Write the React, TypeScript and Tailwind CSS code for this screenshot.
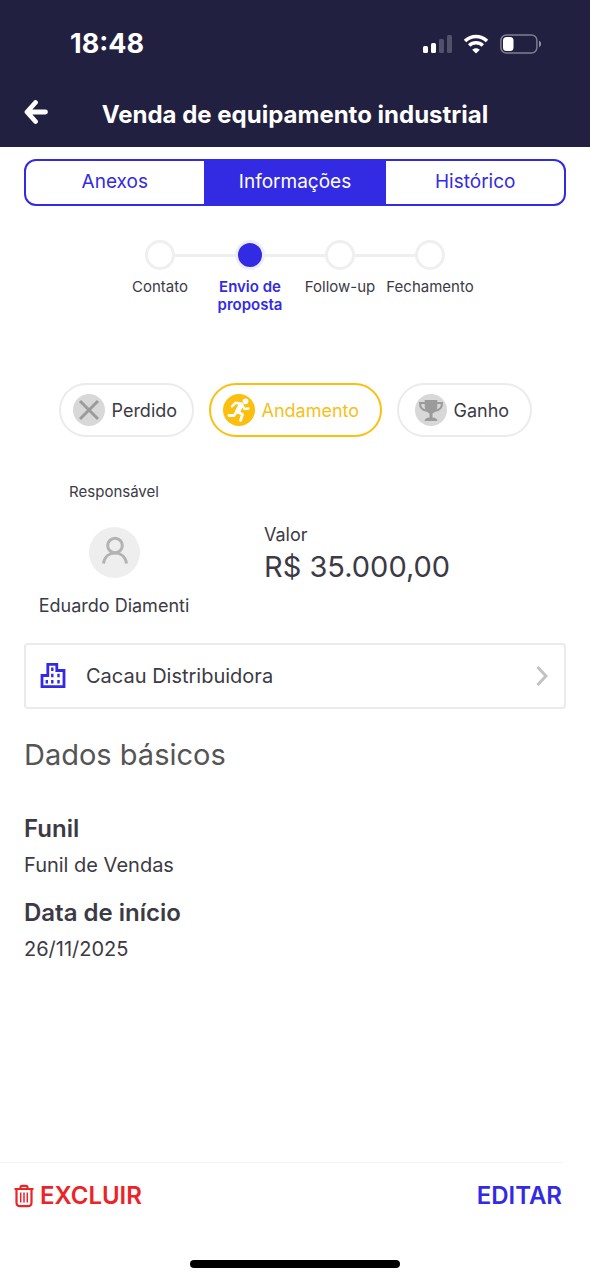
import type { ReactNode } from "react";

const tabs = ["Anexos", "Informações", "Histórico"];
const steps = ["Contato", "Envio de proposta", "Follow-up", "Fechamento"];
const activeStep = 1;

function StatusBar() {
  return (
    <div className="flex h-22 items-center justify-between pr-12 pl-[70px]">
      <span className="text-[27px] leading-8 font-bold">18:48</span>
      <div className="flex items-center gap-[10px]">
        <svg className="h-5 w-[31px]" viewBox="0 0 31 20" fill="currentColor" aria-hidden="true">
          <rect x="0" y="12" width="5" height="7" rx="1.5" />
          <rect x="8" y="9" width="5" height="10" rx="1.5" />
          <rect x="16" y="5" width="5" height="14" rx="1.5" opacity="0.22" />
          <rect x="24" y="1" width="5" height="18" rx="1.5" opacity="0.22" />
        </svg>
        <svg className="h-5 w-[26px]" viewBox="0 0 26 20" fill="none" stroke="currentColor" aria-hidden="true">
          <path d="M1 7C7.500.9 16.500.9 23 7" strokeWidth="3.600" />
          <path d="M5.200 11.500C9 7.900 15 7.900 18.800 11.500" strokeWidth="3.500" />
          <path d="M12 19.600L8.200 15.700C10.200 13.600 13.800 13.600 15.800 15.700Z" fill="currentColor" stroke="none" />
        </svg>
        <svg className="h-5 w-[42px]" viewBox="0 0 42 20" fill="none" aria-hidden="true">
          <rect x="0.900" y="0.900" width="36" height="18.200" rx="5.500" stroke="currentColor" strokeWidth="1.500" opacity="0.42" />
          <rect x="3" y="3" width="10.500" height="14" rx="3.500" fill="currentColor" />
          <path d="M39 6.800C41.800 8 41.800 12 39 13.200Z" fill="currentColor" opacity="0.5" />
        </svg>
      </div>
    </div>
  );
}

function Tabs() {
  return (
    <div role="tablist" className="mx-6 mt-3 flex h-[47px] overflow-hidden rounded-xl border-2 border-[#332be3]">
      {tabs.map((tab) => (
        <button
          key={tab}
          type="button"
          role="tab"
          aria-selected={tab === "Informações"}
          className={
            tab === "Informações"
              ? "flex-1 bg-[#332be3] text-[19px] text-white"
              : "w-[33%] text-[19px] text-[#332be3]"
          }
        >
          {tab}
        </button>
      ))}
    </div>
  );
}

function Stepper() {
  return (
    <ol className="mt-[34px] flex h-[88px] justify-center">
      {steps.map((step, i) => (
        <li key={step} className="flex w-[90px] flex-col items-center">
          <div className="flex w-full items-center">
            <span className={i === 0 ? "h-[3px] flex-1" : "h-[3px] flex-1 bg-[#efefef]"} />
            <span
              className={
                i === activeStep
                  ? "size-[30px] rounded-full border-3 border-[#eeeefa] bg-[#332be3]"
                  : "size-[30px] rounded-full border-3 border-[#efefef]"
              }
            />
            <span className={i === steps.length - 1 ? "h-[3px] flex-1" : "h-[3px] flex-1 bg-[#efefef]"} />
          </div>
          <span
            className={
              i === activeStep
                ? "mt-2 px-2 text-center text-[15px] leading-[18px] font-semibold text-[#332be3]"
                : "mt-2 text-center text-[15px] leading-[18px]"
            }
          >
            {step}
          </span>
        </li>
      ))}
    </ol>
  );
}

function StatusButton({ label, active, children }: { label: string; active?: boolean; children: ReactNode }) {
  return (
    <button
      type="button"
      aria-pressed={!!active}
      className={
        active
          ? "flex h-[54px] w-[173px] items-center gap-[7px] rounded-full border-2 border-[#fbbf10] pl-3 text-[18px] text-[#f6bf1d]"
          : "flex h-[54px] w-[135px] items-center gap-[7px] rounded-full border-2 border-[#ebebeb] pl-3 text-[18px]"
      }
    >
      {children}
      {label}
    </button>
  );
}

function Field({ label, value }: { label: string; value: string }) {
  return (
    <div>
      <dt className="text-[24px] leading-8 font-semibold">{label}</dt>
      <dd className="mt-1 text-[20px] leading-8">{value}</dd>
    </div>
  );
}

export default function App() {
  return (
    <div className="flex min-h-screen flex-col bg-white font-['Inter',sans-serif] text-[#3c3a45]">
      <header className="h-[147px] bg-[#222040] text-white">
        <StatusBar />
        <div className="flex h-[54px] items-center px-6">
          <button type="button" aria-label="Voltar" className="pb-1.5">
            <svg className="size-6" viewBox="0 0 24 24" fill="none" stroke="currentColor" strokeWidth="4.800" strokeLinecap="round" strokeLinejoin="round" aria-hidden="true">
              <path d="M11.500 2.500L3 12L11.500 21.500M4 12H21.500" />
            </svg>
          </button>
          <h1 className="flex-1 pr-6 text-center text-[24px] leading-8 font-bold">Venda de equipamento industrial</h1>
        </div>
      </header>

      <main className="flex-1">
        <Tabs />
        <Stepper />

        <div className="mt-[55px] flex justify-center gap-[15px]">
          <StatusButton label="Perdido">
            <svg className="size-8" viewBox="0 0 32 32" aria-hidden="true">
              <circle cx="16" cy="16" r="16" fill="#d8d8d8" />
              <path d="M7 7L25 25M25 7L7 25" stroke="#9b9b9b" strokeWidth="3" />
            </svg>
          </StatusButton>
          <StatusButton label="Andamento" active>
            <svg className="size-8" viewBox="0 0 32 32" fill="none" stroke="#fff" strokeLinecap="round" strokeLinejoin="round" aria-hidden="true">
              <circle cx="16" cy="16" r="16" fill="#fbbf10" stroke="none" />
              <circle cx="22.500" cy="7.300" r="2.900" fill="#fff" stroke="none" />
              <path d="M18 11L14.800 17" strokeWidth="5" />
              <path d="M17.500 9.700L12.500 8.800L9 12.300M19.500 11.500L21.500 15L25.500 14.500" strokeWidth="2.400" />
              <path d="M15 18L19.500 20.500L17.500 26.500M13.500 18L11 21.500L6 21.500" strokeWidth="2.800" />
            </svg>
          </StatusButton>
          <StatusButton label="Ganho">
            <svg className="ml-1 size-8" viewBox="0 0 32 32" fill="none" aria-hidden="true">
              <circle cx="16" cy="16" r="16" fill="#d8d8d8" />
              <path d="M9.700 6H22.300V12C22.300 16.500 19.700 18.500 17.500 19.500V23.500C20.500 23.700 22 24.600 22.500 27H9.500C10 24.600 11.500 23.700 14.500 23.500V19.500C12.300 18.500 9.700 16.500 9.700 12Z" fill="#9b9b9b" />
              <path d="M10.500 9H5C5 13.500 7.500 16.300 12 16.800M21.500 9H27C27 13.500 24.500 16.300 20 16.800" stroke="#9b9b9b" strokeWidth="2" />
            </svg>
          </StatusButton>
        </div>

        <section className="mt-[45px] flex">
          <div className="flex w-[228px] flex-col items-center">
            <span className="text-[15px] leading-5">Responsável</span>
            <svg className="mt-[25px] size-[51px]" viewBox="0 0 51 51" fill="none" stroke="#b3b3b3" strokeWidth="3" aria-hidden="true">
              <circle cx="25.500" cy="25.500" r="25.500" fill="#eee" stroke="none" />
              <circle cx="26" cy="18.500" r="7.300" />
              <path d="M14.500 36.500C15.500 29.500 20.500 26 26 26S36.500 29.500 37.500 36.500" />
            </svg>
            <span className="mt-4 text-[18px] leading-6">Eduardo Diamenti</span>
          </div>
          <div className="ml-9 flex flex-col pt-[41px]">
            <span className="text-[18px] leading-6">Valor</span>
            <span className="text-[29px] leading-10">R$ 35.000,00</span>
          </div>
        </section>

        <div className="mx-6 mt-[25px]">
          <button type="button" className="flex h-[66px] w-full items-center rounded border-2 border-[#ebebeb] pr-4 pl-[14px] text-[20px]">
            <svg className="size-[26px]" viewBox="0 0 26 26" fill="none" stroke="#332be3" strokeWidth="2.800" aria-hidden="true">
              <path d="M2 23.600V12.500H7.800V1.400H16.800V7.500H24V23.600Z" />
              <path d="M12.300 4.500V8M12.300 10.800V14.300M18.500 10.800V14.300M6.800 17V20.500M12.300 17V20.500M18.500 17V20.500" strokeWidth="2.400" />
            </svg>
            <span className="ml-5">Cacau Distribuidora</span>
            <svg className="ml-auto h-5 w-3" viewBox="0 0 12 20" fill="none" stroke="#c2c2c2" strokeWidth="3" aria-hidden="true">
              <path d="M1.500 1L10 10L1.500 19" />
            </svg>
          </button>
        </div>

        <section className="mx-6 mt-[26px]">
          <h2 className="text-[29px] leading-10 text-[#555]">Dados básicos</h2>
          <dl className="mt-[38px] flex flex-col gap-4">
            <Field label="Funil" value="Funil de Vendas" />
            <Field label="Data de início" value="26/11/2025" />
          </dl>
        </section>
      </main>

      <footer>
        <div className="mr-[27px] border-t border-[#f4f4f4]" />
        <div className="flex h-[97px] items-start justify-between pt-[17px] pr-7 pl-[14px] text-[24px] leading-8 font-semibold">
          <button type="button" className="flex items-center gap-[6px] text-[#ec2427]">
            <svg className="h-6 w-5" viewBox="0 0 20 24" fill="none" stroke="currentColor" strokeWidth="2.200" aria-hidden="true">
              <path d="M0.500 5H19.500M6.500 5V3.500Q6.500 1.800 8.200 1.800H11.800Q13.500 1.800 13.500 3.500V5M2.500 5V18.500Q2.500 22.200 6.200 22.200H13.800Q17.500 22.200 17.500 18.500V5" />
              <path d="M6.700 8.500V18.500M10 8.500V18.500M13.300 8.500V18.500" strokeWidth="1.500" />
            </svg>
            EXCLUIR
          </button>
          <button type="button" className="text-[#332be3]">EDITAR</button>
        </div>
        <div className="flex justify-center pb-3">
          <div className="h-2 w-[210px] rounded-full bg-black" />
        </div>
      </footer>
    </div>
  );
}
